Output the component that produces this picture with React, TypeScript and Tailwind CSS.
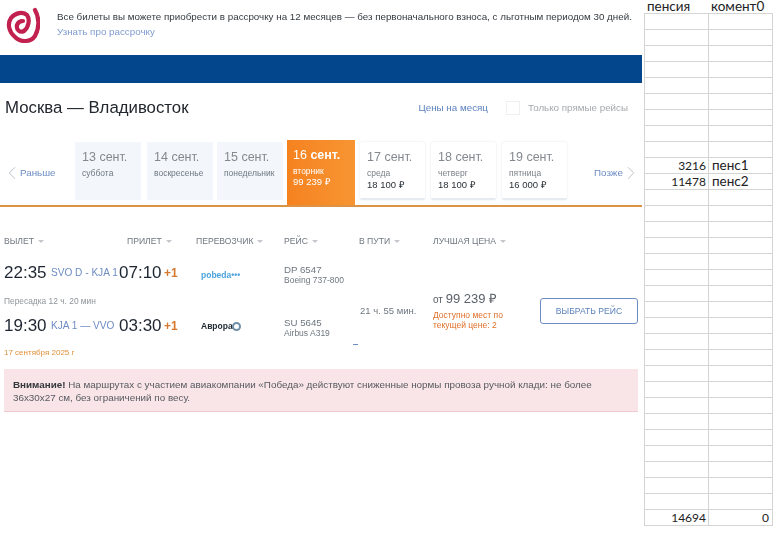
import React from "react";
import { ChevronLeft, ChevronRight } from "lucide-react";

const dates = [
    { date: "13 сент.", day: "суббота", gap: "mr-[6px]" },
    { date: "14 сент.", day: "воскресенье", gap: "mr-[4px]" },
    { date: "15 сент.", day: "понедельник", gap: "mr-[4px]" },
];
const nextDates = [
    { date: "17 сент.", day: "среда", price: "18 100 ₽" },
    { date: "18 сент.", day: "четверг", price: "18 100 ₽" },
    { date: "19 сент.", day: "пятница", price: "16 000 ₽" },
];

const sheetCells: Record<number, [string, string]> = {
    9: ["3216", "пенс1"],
    10: ["11478", "пенс2"],
    31: ["14694", "0"],
};

const Th = ({ label, className }: { label: string; className: string }) => (
    <div className={`flex shrink-0 items-center gap-1 whitespace-nowrap text-[8.6px] text-[#6f7780] ${className}`}>
        {label}
        <span className="mt-[1px] h-[1px] w-0 border-x-[3px] border-t-[3px] border-x-transparent border-t-[#c4c8cc]" />
    </div>
);

const Leg = ({ dep, route, arr, flight, plane, logo }: { dep: string; route: string; arr: string; flight: string; plane: string; logo: React.ReactNode }) => (
    <div className="flex h-[24px] items-center">
        <span className="w-[47px] shrink-0 text-[17px] text-[#1d2530]">{dep}</span>
        <span className="w-[68px] shrink-0 whitespace-nowrap text-[10.1px] text-[#6d8cc4]">{route}</span>
        <span className="w-[45px] shrink-0 text-[17px] text-[#1d2530]">{arr}</span>
        <span className="w-[32px] shrink-0 text-[12px] font-bold text-[#d8782f]">+1</span>
        <div className="w-[88px] shrink-0 pl-[5px]">{logo}</div>
        <div className="whitespace-nowrap pt-[4px] text-[8.5px] leading-[10px] text-[#6f7780]">
            <div className="text-[9.7px]">{flight}</div>
            <div>{plane}</div>
        </div>
    </div>
);

const Logo = () => (
    <svg viewBox="0 0 34 36" className="h-[36px] w-[34px] shrink-0">
        <path
            d="M29 3 C33 10 34 20 29 29 C25 35 15 36 9 30 C3 25 1 17 5 11 C9 6 17 4 21 8 C24 12 23 20 18 24 C14 26 10 23 11 18 C12 15 14 14 17 14"
            fill="none"
            stroke="#c2214f"
            strokeWidth="4.2"
            strokeLinecap="round"
        />
    </svg>
);

const App = () => {
    return (
        <div className="flex h-[538px] w-[776px] overflow-hidden bg-white font-['Liberation_Sans',sans-serif]">
            <div className="w-[644px] shrink-0 blur-[0.35px]">
                <div className="flex h-[55px] pl-[6px] pt-[7px]">
                    <Logo />
                    <div className="ml-[17px] pt-[2px] text-[9.8px] leading-[15px] whitespace-nowrap">
                        <div className="text-[#333a40]">Все билеты вы можете приобрести в рассрочку на 12 месяцев — без первоначального взноса, с льготным периодом 30 дней.</div>
                        <div className="text-[#7f9bd0]">Узнать про рассрочку</div>
                    </div>
                </div>
                <div className="h-[28px] w-[642px] bg-[#03468c]" />
                <div className="flex h-[57px] items-center pb-[7px] pl-[5px] pr-[16px]">
                    <div className="text-[16.8px] text-[#22282e]">Москва — Владивосток</div>
                    <div className="ml-auto text-[9.8px] text-[#5c82bd]">Цены на месяц</div>
                    <div className="ml-[18px] h-[14px] w-[14px] border border-[#eef0f2]" />
                    <div className="ml-[8px] text-[9.8px] text-[#a5a9ad]">Только прямые рейсы</div>
                </div>
                <div className="flex h-[67px] w-[642px] items-start border-b-2 border-[#dc9343] pl-[7px]">
                    <div className="mt-[2px] flex h-[62px] w-[68px] shrink-0 items-center text-[9.8px] text-[#6d8cc4]">
                        <ChevronLeft size={22} strokeWidth={1} className="ml-[-6px] mr-[-3px] text-[#b9bdc2]" />
                        Раньше
                    </div>
                    {dates.map((d) => (
                        <div key={d.date} className={`mt-[2px] h-[58px] w-[66px] shrink-0 ${d.gap} bg-[#f3f7fc] pl-[7px] pt-[8px]`}>
                            <div className="text-[12.5px] leading-[15px] text-[#84898f]">{d.date}</div>
                            <div className="mt-[3px] text-[8.5px] leading-[11px] text-[#6f7780]">{d.day}</div>
                        </div>
                    ))}
                    <div className="h-[65px] w-[68px] shrink-0 bg-gradient-to-r from-[#f5821f] to-[#f79532] pl-[6px] pt-[8px] text-white">
                        <div className="text-[12.5px] leading-[15px]">16 <span className="font-bold">сент.</span></div>
                        <div className="mt-[3px] text-[8.5px] leading-[10px]">вторник</div>
                        <div className="mt-[1px] text-[9.5px] leading-[10px]">99 239 ₽</div>
                    </div>
                    {nextDates.map((d, i) => (
                        <div key={d.date} className={`mt-[2px] h-[58px] w-[65px] shrink-0 ${i === 0 ? "ml-[5px]" : "ml-[6px]"} rounded-[2px] border-b-2 border-[#e6ebf1] pl-[7px] pt-[8px] shadow-[0_0_2px_rgba(120,140,170,0.25)]`}>
                            <div className="text-[12.5px] leading-[15px] text-[#84898f]">{d.date}</div>
                            <div className="mt-[3px] text-[8.5px] leading-[10px] text-[#7a8087]">{d.day}</div>
                            <div className="mt-[2px] text-[9.5px] leading-[10px] text-[#2a3037]">{d.price}</div>
                        </div>
                    ))}
                    <div className="ml-[27px] mt-[2px] flex h-[62px] shrink-0 items-center text-[9.8px] text-[#6d8cc4]">
                        Позже
                        <ChevronRight size={22} strokeWidth={1} className="ml-[-3px] text-[#b9bdc2]" />
                    </div>
                </div>
                <div className="mt-[27px] flex h-[14px] items-center pl-[4px]">
                    <Th label="ВЫЛЕТ" className="w-[123px]" />
                    <Th label="ПРИЛЕТ" className="w-[69px]" />
                    <Th label="ПЕРЕВОЗЧИК" className="w-[88px]" />
                    <Th label="РЕЙС" className="w-[75px]" />
                    <Th label="В ПУТИ" className="w-[74px]" />
                    <Th label="ЛУЧШАЯ ЦЕНА" className="w-[100px]" />
                </div>
                <div className="mt-[13px] flex pl-[4px]">
                    <div className="w-[356px] shrink-0">
                        <Leg
                            dep="22:35"
                            route="SVO D - KJA 1"
                            arr="07:10"
                            flight="DP 6547"
                            plane="Boeing 737-800"
                            logo={<span className="text-[8.5px] font-bold text-[#4aa3dc]">pobeda•••</span>}
                        />
                        <div className="mt-[9px] h-[14px] text-[8.4px] leading-[14px] text-[#8f959b]">Пересадка 12 ч. 20 мин</div>
                        <div className="mt-[6px]">
                            <Leg
                                dep="19:30"
                                route="KJA 1 — VVO"
                                arr="03:30"
                                flight="SU 5645"
                                plane="Airbus A319"
                                logo={
                                    <span className="flex items-center text-[8.5px] font-bold text-[#222b33]">
                                        Аврора
                                        <span className="ml-[-1px] h-[9px] w-[9px] rounded-full border-2 border-[#6f8fa8]" />
                                    </span>
                                }
                            />
                        </div>
                        <div className="mt-[8px] flex h-[14px] items-start justify-between pr-[2px] text-[8px] leading-[14px] text-[#e0903a]">
                            17 сентября 2025 г
                            <span className="mt-[-2px] h-[1px] w-[5px] bg-[#6d8cc4]" />
                        </div>
                    </div>
                    <div className="w-[73px] shrink-0 pt-[43px] text-[9.5px] text-[#6f7780]">21 ч. 55 мин.</div>
                    <div className="w-[107px] shrink-0 pt-[29px]">
                        <div className="text-[10px] leading-[18px] text-[#5a6068]">
                            от <span className="text-[13px]">99 239 ₽</span>
                        </div>
                        <div className="mt-[1px] text-[8.5px] leading-[10px] text-[#e0702a]">
                            Доступно мест по
                            <br />
                            текущей цене: 2
                        </div>
                    </div>
                    <div className="pt-[36px]">
                        <button className="h-[26px] w-[98px] rounded-[3px] border border-[#6d8cc4] text-[8.6px] text-[#5c82bd]">ВЫБРАТЬ РЕЙС</button>
                    </div>
                </div>
                <div className="ml-[4px] mt-[9px] h-[43px] w-[634px] border-b border-[#eec9d0] bg-[#f9e4e7] px-[9px] pt-[9px] text-[9.85px] leading-[13px] text-[#555b61]">
                    <b className="text-[#33383d]">Внимание!</b> На маршрутах с участием авиакомпании «Победа» действуют сниженные нормы провоза ручной клади: не более
                    <br />
                    36х30х27 см, без ограничений по весу.
                </div>
            </div>
            <div className="w-[129px] shrink-0 font-['Lato',sans-serif] text-[13.5px] text-[#222]">
                <div className="flex h-[14px] items-start border-b border-[#d4d4d4] leading-[13px]">
                    <div className="w-[64px] pl-[3px]">пенсия</div>
                    <div className="w-[64px] pl-[3px]">комент0</div>
                </div>
                {Array.from({ length: 32 }, (_, i) => (
                    <div key={i} className="flex h-[16px] border-b border-l border-[#d4d4d4] leading-[15px]">
                        <div className="w-[64px] border-r border-[#d4d4d4] pr-[2px] text-right text-[12px]">{sheetCells[i]?.[0]}</div>
                        <div className={`w-[64px] border-r border-[#d4d4d4] px-[3px] ${i === 31 ? "text-right text-[12px]" : ""}`}>{sheetCells[i]?.[1]}</div>
                    </div>
                ))}
            </div>
        </div>
    );
};

export default App;
